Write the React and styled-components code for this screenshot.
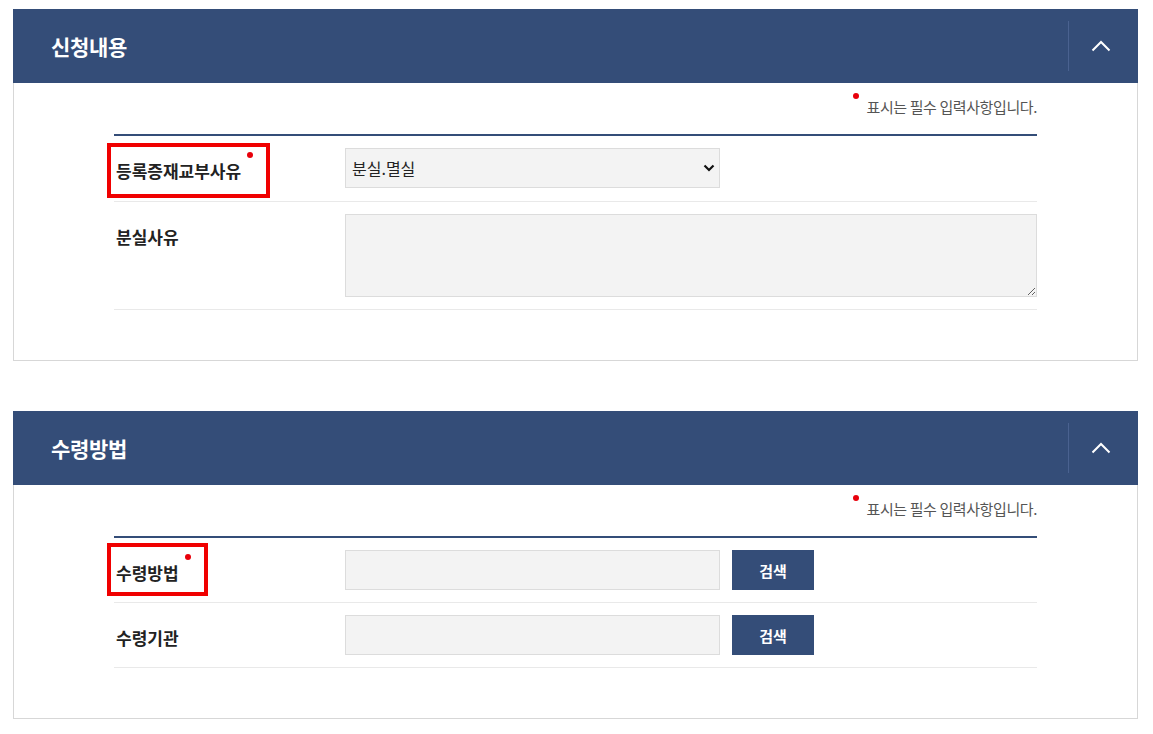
import { createGlobalStyle, styled } from "styled-components";

const navy = "#344d78";

const GlobalStyle = createGlobalStyle`
  body {
    margin: 0;
    background: #fff;
    font-family: "Noto Sans CJK KR", "Noto Sans", sans-serif;
    color: #222;
  }
`;

const Page = styled.div`
  padding: 9px 15px 20px 13px;
  display: flex;
  flex-direction: column;
  gap: 50px;
`;

const Section = styled.section`
  width: 1125px;
`;

const Head = styled.header`
  height: 74px;
  background: ${navy};
  display: flex;
  align-items: center;
  justify-content: space-between;
  padding-left: 38px;
  box-sizing: border-box;
`;

const Title = styled.h2`
  margin: 0;
  color: #fff;
  font-size: 21px;
  font-weight: 700;
  letter-spacing: -0.3px;
`;

const Toggle = styled.button`
  width: 70px;
  height: 50px;
  border: 0;
  border-left: 1px solid #4a6290;
  background: transparent;
  display: flex;
  align-items: center;
  justify-content: center;
  padding: 0 5px 0 0;
  cursor: pointer;
`;

const Body = styled.div`
  border: 1px solid #d7d7d7;
  border-top: 0;
  padding: 13px 100px 50px;
`;

const Note = styled.p`
  margin: 0 0 16px;
  text-align: right;
  font-size: 15px;
  line-height: 22px;
  color: #555;
  letter-spacing: -0.4px;
`;

const Dot = styled.span`
  display: inline-block;
  width: 6px;
  height: 6px;
  border-radius: 50%;
  background: #e8000b;
  vertical-align: top;
  margin: ${(p) => p.$m || "0"};
`;

const Table = styled.div`
  border-top: 2px solid ${navy};
`;

const Row = styled.div`
  display: flex;
  align-items: flex-start;
  border-bottom: 1px solid #e9e9e9;
  padding: 12px 0 ${(p) => p.$pb || 12}px;
`;

const Label = styled.div`
  position: relative;
  flex: 0 0 231px;
  height: 40px;
  box-sizing: border-box;
  padding: 6px 0 0 2px;
  line-height: 34px;
  font-size: 17px;
  font-weight: 700;
  color: #222;
`;

const Highlight = styled.span`
  position: absolute;
  left: -7px;
  top: ${(p) => p.$top}px;
  width: ${(p) => p.$w}px;
  height: ${(p) => p.$h}px;
  border: 4px solid #f00000;
  box-sizing: border-box;
  pointer-events: none;
`;

const Field = styled.div`
  flex: 1;
  display: flex;
  align-items: center;
  gap: 12px;
`;

const SelectWrap = styled.div`
  position: relative;
  width: 375px;
`;

const Select = styled.select`
  width: 100%;
  height: 40px;
  display: block;
  appearance: none;
  background: #f3f3f3;
  border: 1px solid #dcdcdc;
  border-radius: 0;
  padding: 0 30px 0 6px;
  font-family: inherit;
  font-size: 16px;
  color: #222;
`;

const Caret = styled.svg`
  position: absolute;
  right: 5px;
  top: 16px;
  pointer-events: none;
`;

const TextArea = styled.textarea`
  width: 100%;
  height: 83px;
  box-sizing: border-box;
  background: #f3f3f3;
  border: 1px solid #dcdcdc;
  border-radius: 0;
  display: block;
  font-family: inherit;
`;

const Input = styled.input`
  width: 375px;
  height: 40px;
  box-sizing: border-box;
  background: #f3f3f3;
  border: 1px solid #dcdcdc;
  border-radius: 0;
  padding: 0 8px;
`;

const SearchBtn = styled.button`
  width: 82px;
  height: 40px;
  border: 0;
  background: ${navy};
  color: #fff;
  font-family: inherit;
  font-size: 15px;
  font-weight: 700;
  cursor: pointer;
`;

const ChevronUp = () => (
  <svg width="20" height="12" viewBox="0 0 20 12">
    <path d="M1.5 10.5 10 2l8.5 8.5" fill="none" stroke="#fff" strokeWidth="2" />
  </svg>
);

const Panel = ({ title, children }) => (
  <Section>
    <Head>
      <Title>{title}</Title>
      <Toggle aria-label="접기">
        <ChevronUp />
      </Toggle>
    </Head>
    <Body>
      <Note>
        <Dot $m="-3px 8px 0 0" />
        표시는 필수 입력사항입니다.
      </Note>
      <Table>{children}</Table>
    </Body>
  </Section>
);

const Required = ({ text, box }) => (
  <Label>
    {text}
    <Dot $m="-2px 0 0 6px" />
    <Highlight $w={box.w} $h={box.h} $top={box.top} />
  </Label>
);

export default function App() {
  return (
    <>
      <GlobalStyle />
      <Page>
        <Panel title="신청내용">
          <Row $pb={13}>
            <Required text="등록증재교부사유" box={{ w: 163, h: 55, top: -5 }} />
            <Field>
              <SelectWrap>
                <Select defaultValue="lost">
                  <option value="lost">분실.멸실</option>
                </Select>
                <Caret width="12" height="8" viewBox="0 0 12 8">
                  <path d="M1.5 1.5 6 6l4.5-4.5" fill="none" stroke="#111" strokeWidth="2.2" />
                </Caret>
              </SelectWrap>
            </Field>
          </Row>
          <Row $pb={12}>
            <Label>분실사유</Label>
            <Field>
              <TextArea />
            </Field>
          </Row>
        </Panel>
        <Panel title="수령방법">
          <Row $pb={12}>
            <Required text="수령방법" box={{ w: 101, h: 53, top: -7 }} />
            <Field>
              <Input />
              <SearchBtn>검색</SearchBtn>
            </Field>
          </Row>
          <Row $pb={12}>
            <Label>수령기관</Label>
            <Field>
              <Input />
              <SearchBtn>검색</SearchBtn>
            </Field>
          </Row>
        </Panel>
      </Page>
    </>
  );
}
